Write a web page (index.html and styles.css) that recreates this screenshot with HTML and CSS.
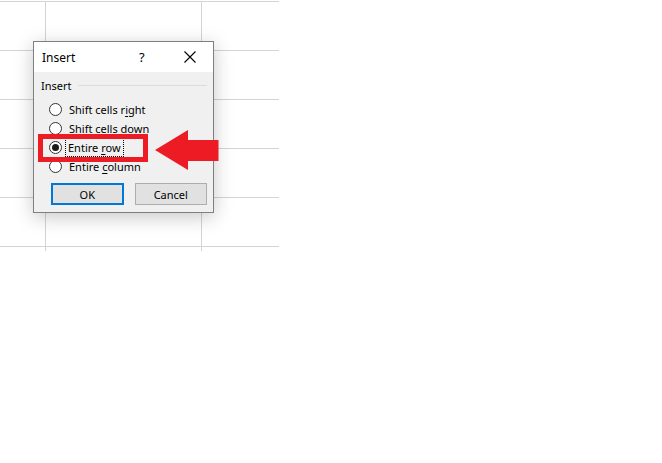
FILE: index.html
```html
<!DOCTYPE html>
<html>
<head>
<meta charset="utf-8">
<link rel="stylesheet" href="styles.css">
</head>
<body>
<div class="sheet">
  <div class="grid">
    <div class="c c1 r0"></div><div class="c c2 r0"></div><div class="c c3 r0"></div>
    <div class="c c1"></div><div class="c c2"></div><div class="c c3"></div>
    <div class="c c1"></div><div class="c c2"></div><div class="c c3"></div>
    <div class="c c1"></div><div class="c c2"></div><div class="c c3"></div>
    <div class="c c1"></div><div class="c c2"></div><div class="c c3"></div>
    <div class="c c1"></div><div class="c c2"></div><div class="c c3"></div>
    <div class="c c1 rl"></div><div class="c c2 rl"></div><div class="c c3 rl"></div>
  </div>

  <div class="dialog">
    <div class="titlebar">
      <span class="title">Insert</span>
      <span class="help">?</span>
      <svg class="close" width="12" height="12" viewBox="0 0 12 12"><path d="M0.5 0.5 L11.5 11.5 M11.5 0.5 L0.5 11.5" stroke="#000" stroke-width="1.1" fill="none"/></svg>
    </div>
    <div class="body">
      <div class="group"><span>Insert</span><div class="rule"></div></div>
      <div class="options">
        <div class="opt"><span class="radio"></span><span class="lbl">Shift cells r<u>i</u>ght</span></div>
        <div class="opt"><span class="radio"></span><span class="lbl">Shift cells <u>d</u>own</span></div>
        <div class="opt"><span class="radio on"></span><span class="lbl focus">Entire <u>r</u>ow</span></div>
        <div class="opt"><span class="radio"></span><span class="lbl">Entire <u>c</u>olumn</span></div>
      </div>
      <div class="buttons">
        <div class="btn default">OK</div>
        <div class="btn">Cancel</div>
      </div>
    </div>
  </div>

  <div class="highlight"></div>
  <svg class="arrow" width="64" height="40" viewBox="0 0 64 40"><polygon points="0,20 33,0 33,10 63.5,10 63.5,31 33,31 33,40" fill="#ed1c24"/></svg>
</div>
</body>
</html>
```

FILE: styles.css
```css
html, body {
  margin: 0;
  padding: 0;
  background: #ffffff;
}
body {
  font-family: "Noto Sans", "Segoe UI", sans-serif;
  font-size: 11px;
  color: #000;
}
.sheet {
  position: relative;
  width: 662px;
  height: 463px;
}
.grid {
  display: grid;
  grid-template-columns: 46px 156px 77px;
  grid-template-rows: 2px repeat(5, 49px) 4px;
  width: 279px;
}
.c {
  box-sizing: border-box;
  border-bottom: 1px solid #d4d4d4;
}
.c1, .c2 {
  border-right: 1px solid #d4d4d4;
}
.r0 {
  border-right: none;
}
.rl {
  border-bottom: none;
}
.dialog {
  position: absolute;
  left: 33px;
  top: 41px;
  width: 181px;
  height: 172px;
  box-sizing: border-box;
  border: 1px solid #7f7f7f;
  background: #f0f0f0;
  box-shadow: 0 4px 18px rgba(0, 0, 0, 0.22);
  display: flex;
  flex-direction: column;
}
.titlebar {
  height: 30px;
  background: #ffffff;
  display: flex;
  align-items: center;
  padding-left: 8px;
  font-size: 12px;
}
.title {
  flex: 1;
}
.help {
  width: 12px;
  margin-right: 33px;
  font-size: 13px;
}
.close {
  margin-right: 17px;
}
.body {
  display: flex;
  flex-direction: column;
  padding: 5px 6px 0 7px;
}
.group {
  display: flex;
  align-items: center;
  height: 16px;
  gap: 6px;
}
.rule {
  flex: 1;
  height: 1px;
  background: #dcdcdc;
}
.options {
  display: flex;
  flex-direction: column;
  margin-top: 7px;
  padding-left: 8px;
}
.opt {
  display: flex;
  align-items: center;
  height: 19px;
}
.radio {
  box-sizing: border-box;
  width: 13px;
  height: 13px;
  border: 1px solid #333;
  border-radius: 50%;
  background: #fff;
  margin-right: 7px;
  display: flex;
  align-items: center;
  justify-content: center;
}
.radio.on::after {
  content: "";
  width: 7px;
  height: 7px;
  border-radius: 50%;
  background: #1a1a1a;
}
.lbl u {
  text-decoration-thickness: 1px;
  text-underline-offset: 2px;
}
.focus {
  outline: 1px dotted #000;
  outline-offset: 1px;
  padding: 0 1px;
  margin-left: -2px;
}
.buttons {
  display: flex;
  gap: 11px;
  margin-top: 7px;
  padding-left: 10px;
}
.btn {
  box-sizing: border-box;
  width: 73px;
  height: 22px;
  border: 1px solid #adadad;
  background: #e1e1e1;
  display: flex;
  align-items: center;
  justify-content: center;
}
.btn.default {
  border: 2px solid #0078d7;
}
.highlight {
  position: absolute;
  left: 38px;
  top: 134px;
  width: 110px;
  height: 28px;
  box-sizing: border-box;
  border: 5px solid #ed1c24;
}
.arrow {
  position: absolute;
  left: 155px;
  top: 130px;
}
```
